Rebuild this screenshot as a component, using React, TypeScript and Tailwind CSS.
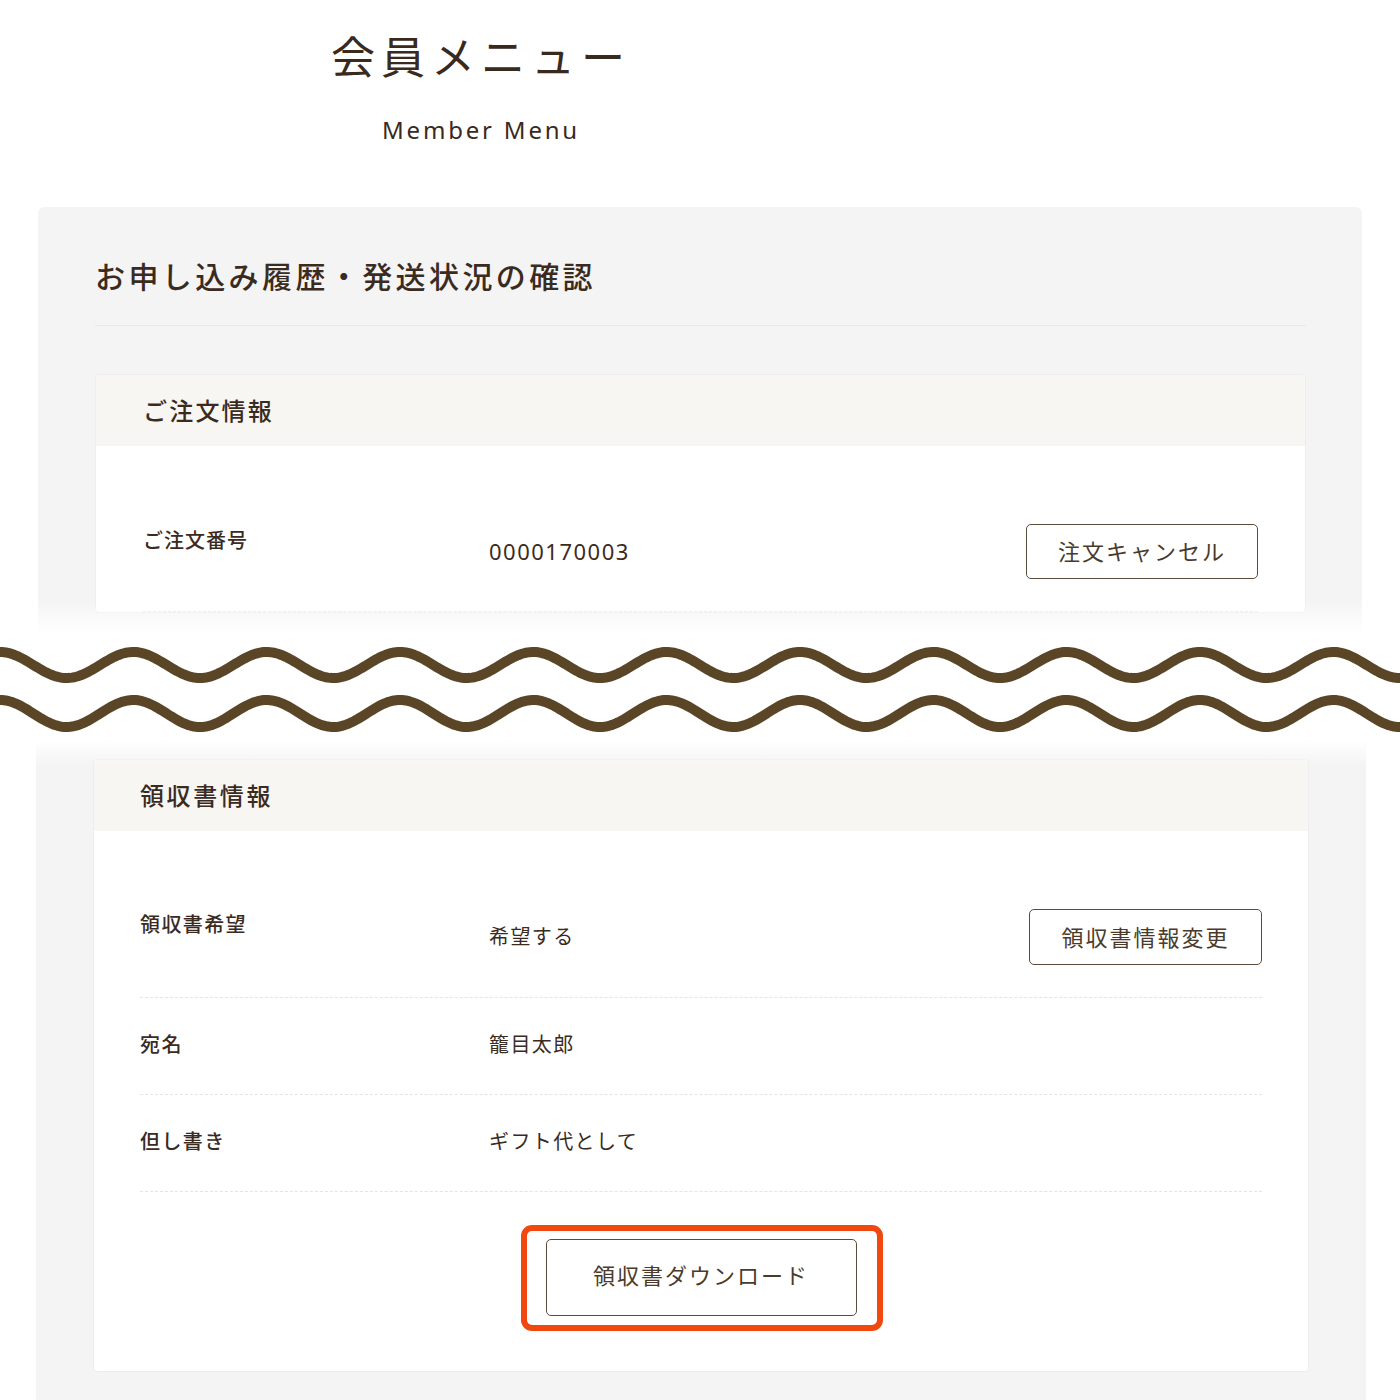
import React from "react";

function wavePath(mid: number, amp: number, period: number, width: number) {
  const pts: string[] = [];
  for (let x = -20; x <= width + 20; x += 2) {
    const y = mid - amp * Math.cos((2 * Math.PI * x) / period);
    pts.push(`${x === -20 ? "M" : "L"}${x.toFixed(1)} ${y.toFixed(2)}`);
  }
  return pts.join(" ");
}

function OutlineButton({ children, className = "" }: { children: React.ReactNode; className?: string }) {
  return (
    <div
      className={`flex items-center justify-center rounded-[5px] border-[1.5px] border-[#5b4c3c] bg-white text-[22px] tracking-[2px] text-[#4a3b2c] ${className}`}
    >
      {children}
    </div>
  );
}

export default function App() {
  return (
    <div
      className="relative h-[1400px] w-[1400px] overflow-hidden bg-white text-[#3b2b1f]"
      style={{ fontFamily: '"Noto Sans", "Noto Sans CJK JP", sans-serif' }}
    >
      {/* top slice */}
      <section className="relative h-[632px] overflow-hidden">
        <header className="flex h-[207px] w-[962px] flex-col items-center pt-[35px]">
          <h1 className="text-[44px] leading-none tracking-[6px] text-[#3a2a1e]">会員メニュー</h1>
          <p className="mt-[39px] text-[24px] leading-none tracking-[2.8px] text-[#3a2a1e]">Member Menu</p>
        </header>
        <div className="ml-[38px] h-[600px] w-[1324px] rounded-[6px] bg-[#f4f4f4] pl-[57px] pr-[56px]">
          <div className="pt-[55px]">
            <h2 className="text-[30px] font-medium leading-none tracking-[3.4px] text-[#3b2b1f]">
              お申し込み履歴・発送状況の確認
            </h2>
            <div className="mt-[33px] border-t border-[#e8e8e8]" />
            <div className="mt-[48px] overflow-hidden rounded-[4px] border border-[#ededed] bg-white">
              <div className="flex h-[71px] items-center bg-[#f7f6f3] px-[47px] text-[24px] font-medium tracking-[2.2px]">
                ご注文情報
              </div>
              <div className="px-[47px]">
                <div className="flex border-b border-dashed border-[#e4e4e4] pb-[32px] pt-[78px]">
                  <div className="w-[346px] self-start pt-[2px] text-[20px] font-medium leading-[30px] tracking-[1px]">ご注文番号</div>
                  <div className="flex-1 self-center text-[22px] tracking-[1.5px]">0000170003</div>
                  <OutlineButton className="h-[55px] w-[232px]">注文キャンセル</OutlineButton>
                </div>
              </div>
            </div>
          </div>
        </div>
        <div className="absolute bottom-0 left-0 h-[32px] w-full bg-linear-to-b from-white/0 to-white" />
      </section>

      {/* waves */}
      <div className="h-[108px]">
        <svg width="1400" height="108" viewBox="0 0 1400 108" className="block">
          <path d={wavePath(33, 13, 133.33, 1400)} fill="none" stroke="#5a4527" strokeWidth="10" strokeLinecap="round" />
          <path d={wavePath(81.5, 13.5, 133.33, 1400)} fill="none" stroke="#5a4527" strokeWidth="10" strokeLinecap="round" />
        </svg>
      </div>

      {/* bottom slice */}
      <section className="relative h-[660px] overflow-hidden">
        <div className="ml-[36px] h-[700px] w-[1330px] bg-[#f4f4f4] px-[57px] pt-[19px]">
          <div className="overflow-hidden rounded-[4px] border border-[#ededed] bg-white">
            <div className="flex h-[71px] items-center bg-[#f7f6f3] px-[46px] text-[24px] font-medium tracking-[2.6px]">
              領収書情報
            </div>
            <div className="px-[46px]">
              <div className="flex border-b border-dashed border-[#e4e4e4] pb-[32px] pt-[78px]">
                <div className="w-[349px] self-start pt-[1px] text-[20px] font-medium leading-[30px] tracking-[1.4px]">領収書希望</div>
                <div className="flex-1 self-center text-[20px] tracking-[1.4px]">希望する</div>
                <OutlineButton className="h-[56px] w-[233px]">領収書情報変更</OutlineButton>
              </div>
              <div className="flex h-[97px] items-center border-b border-dashed border-[#e4e4e4] pb-[2px]">
                <div className="w-[349px] text-[20px] font-medium tracking-[1.4px]">宛名</div>
                <div className="flex-1 text-[20px] tracking-[1.4px]">籠目太郎</div>
              </div>
              <div className="flex h-[97px] items-center border-b border-dashed border-[#e4e4e4] pb-[2px]">
                <div className="w-[349px] text-[20px] font-medium tracking-[1.4px]">但し書き</div>
                <div className="flex-1 text-[20px] tracking-[1.4px]">ギフト代として</div>
              </div>
              <div className="flex justify-center pb-[55px] pt-[47px]">
                <div className="relative">
                  <OutlineButton className="h-[77px] w-[311px] pb-[4px]">領収書ダウンロード</OutlineButton>
                  <div className="pointer-events-none absolute -bottom-[15px] -left-[25px] -right-[26px] -top-[14px] rounded-[11px] border-[6px] border-[#f0480f]" />
                </div>
              </div>
            </div>
          </div>
        </div>
        <div className="absolute left-0 top-0 h-[26px] w-full bg-linear-to-b from-white to-white/0" />
      </section>
    </div>
  );
}
